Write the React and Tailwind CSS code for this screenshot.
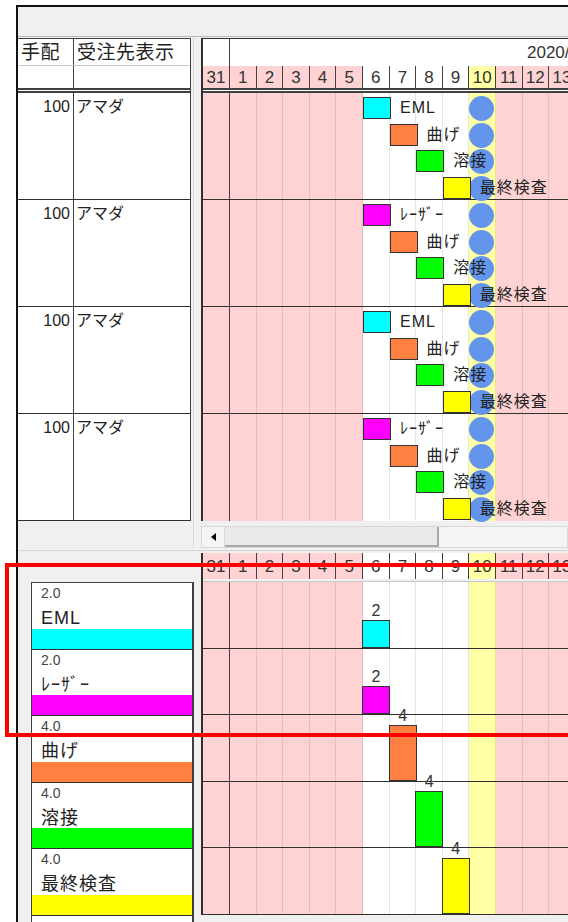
import React from 'react';

const DAYS = [31, 1, 2, 3, 4, 5, 6, 7, 8, 9, 10, 11, 12, 13];
const COL0 = 27;
const COLW = 26.6;
const colLeft = (k) => (k === 0 ? 0 : COL0 + (k - 1) * COLW);

function dayBg(d) {
  if (d === 10) return 'bg-[#ffffa6]';
  if (d >= 6 && d <= 9) return 'bg-white';
  return 'bg-[#ffd3d3]';
}

const TASKS = {
  eml: { name: 'EML', color: 'bg-[#00ffff]' },
  laser: { name: 'ﾚｰｻﾞｰ', color: 'bg-[#ff00ff]' },
  bend: { name: '曲げ', color: 'bg-[#ff8040]' },
  weld: { name: '溶接', color: 'bg-[#00ff00]' },
  check: { name: '最終検査', color: 'bg-[#ffff00]' },
};

// 上段: 受注ごとの工程
const ORDERS = [
  { qty: 100, client: 'アマダ', steps: ['eml', 'bend', 'weld', 'check'] },
  { qty: 100, client: 'アマダ', steps: ['laser', 'bend', 'weld', 'check'] },
  { qty: 100, client: 'アマダ', steps: ['eml', 'bend', 'weld', 'check'] },
  { qty: 100, client: 'アマダ', steps: ['laser', 'bend', 'weld', 'check'] },
];

// 下段: 工程ごとの負荷
const LOADS = [
  { key: 'eml', value: 2, day: 6 },
  { key: 'laser', value: 2, day: 6 },
  { key: 'bend', value: 4, day: 7 },
  { key: 'weld', value: 4, day: 8 },
  { key: 'check', value: 4, day: 9 },
];

function Columns() {
  return (
    <div className="absolute inset-0 flex">
      {DAYS.map((d, k) => (
        <div
          key={k}
          className={`h-full shrink-0 border-r ${k === 0 ? 'w-[27px] border-[#404040]' : 'w-[26.6px] border-black/10'} ${dayBg(d)}`}
        />
      ))}
    </div>
  );
}

function DayHeader({ h = 'h-[22px]' }) {
  return (
    <div className={`flex ${h}`}>
      {DAYS.map((d, k) => (
        <div
          key={k}
          className={`shrink-0 h-full border-r border-[#404040] flex items-center justify-center text-[17px] leading-none text-[#333] ${k === 0 ? 'w-[27px]' : 'w-[26.6px]'} ${dayBg(d)}`}
        >
          {d}
        </div>
      ))}
    </div>
  );
}

function OrderRow({ order, last }) {
  return (
    <div className={`relative h-[107px] ${last ? '' : 'border-b border-[#303030]'}`}>
      {order.steps.map((s, i) => (
        <div
          key={'c' + i}
          className="absolute w-[25px] h-[25px] rounded-full bg-[#6495ed]"
          style={{ left: colLeft(10), top: 3 + i * 26.6 }}
        />
      ))}
      {order.steps.map((s, i) => {
        const x = colLeft(6 + i);
        const y = 4 + i * 26.6;
        return (
          <React.Fragment key={i}>
            <div
              className={`absolute w-[28px] h-[22px] border border-[#333] ${TASKS[s].color}`}
              style={{ left: x, top: y }}
            />
            <div
              className="absolute h-[22px] flex items-center whitespace-nowrap text-[16px] tracking-[1px] leading-none text-[#222]"
              style={{ left: x + 37, top: y }}
            >
              {TASKS[s].name}
            </div>
          </React.Fragment>
        );
      })}
    </div>
  );
}

export default function App() {
  return (
    <div className="relative w-[568px] h-[922px] overflow-hidden bg-white font-['Liberation_Sans','Noto_Sans_CJK_JP',sans-serif] text-[#222]">
      <div className="ml-[16px] mt-[5px] h-[917px] border-l-2 border-t-2 border-[#111] bg-[#f0f0f0]">
        {/* 上部の帯 */}
        <div className="h-[30px] border-b border-[#b8b8b8] bg-[#f0f0f0]" />

        {/* 上段 */}
        <div className="flex pt-[1px]">
          <div className="w-[173px] shrink-0">
            <div className="border-t border-r border-[#404040] bg-white">
              <div className="flex h-[27px] border-b border-[#c8c8c8]">
                <div className="w-[56px] border-r border-[#404040] pl-[3px] pt-[4px] text-[19px] tracking-[0.5px] leading-none">手配</div>
                <div className="flex-1 pl-[3px] pt-[4px] text-[19px] tracking-[0.5px] leading-none">受注先表示</div>
              </div>
              <div className="flex h-[27px] border-b-[5px] border-double border-[#404040]">
                <div className="w-[56px] border-r border-[#404040]" />
                <div className="flex-1" />
              </div>
              {ORDERS.map((o, i) => (
                <div key={i} className="flex h-[107px] border-b border-[#303030]">
                  <div className="w-[56px] border-r border-[#404040] pr-[3px] pt-[4px] text-right text-[16px] leading-[20px]">{o.qty}</div>
                  <div className="flex-1 pl-[2px] pt-[4px] text-[16px] leading-[20px]">{o.client}</div>
                </div>
              ))}
            </div>
          </div>

          <div className="w-[8px] shrink-0 ml-[2px] border-l border-[#dadada]" />

          <div className="flex-1 min-w-0">
            <div className="border-l-2 border-t border-[#303030] bg-white">
              <div className="flex h-[27px]">
                <div className="w-[27px] shrink-0 border-r border-[#404040]" />
                <div className="pl-[297px] pt-[5px] whitespace-nowrap text-[17px] leading-none text-[#333]">2020/08</div>
              </div>
              <div className="border-b-[5px] border-double border-[#404040]">
                <DayHeader />
              </div>
              <div className="relative">
                <Columns />
                <div className="relative">
                  {ORDERS.map((o, i) => (
                    <OrderRow key={i} order={o} last={i === ORDERS.length - 1} />
                  ))}
                </div>
              </div>
            </div>

            {/* スクロールバー */}
            <div className="mt-[5px] h-[22px] flex border border-[#d8d8d8] bg-[#f4f4f4]">
              <div className="w-[23px] shrink-0 flex items-center justify-center border-r border-[#d8d8d8]">
                <div className="w-0 h-0 border-y-[4px] border-y-transparent border-r-[5px] border-r-black" />
              </div>
              <div className="w-[214px] shrink-0 bg-[#e9e9e9] border-r-2 border-b-2 border-[#a8a8a8]" />
            </div>
          </div>
        </div>

        {/* 区切り */}
        <div className="mt-[2px] border-t border-[#d4d4d4]" />

        {/* 下段 */}
        <div className="flex">
          <div className="w-[176px] shrink-0 pl-[13px] pt-[31px]">
            <div className="border-l border-t border-r-2 border-[#404040] bg-white h-[400px]">
              {LOADS.map((l) => (
                <div key={l.key} className="flex flex-col h-[66.6px] border-b border-[#303030]">
                  <div className="pl-[9px] pt-[2px] text-[14px] leading-[16px] text-[#444]">{l.value.toFixed(1)}</div>
                  <div className="pl-[9px] mt-[7px] text-[18px] tracking-[1px] leading-[20px] whitespace-nowrap">{TASKS[l.key].name}</div>
                  <div className="flex-1" />
                  <div className={`h-[20px] ${TASKS[l.key].color}`} />
                </div>
              ))}
            </div>
          </div>

          <div className="w-[7px] shrink-0" />

          <div className="flex-1 min-w-0 pt-[2px]">
            <div className="border-l-2 border-[#303030]">
              <DayHeader h="h-[26px]" />
              <div className="h-[3px] border-b border-[#c8c8c8] bg-[#f0f0f0]" />
              <div className="relative">
                <Columns />
                <div className="relative">
                  {LOADS.map((l) => {
                    const h = l.value * 14;
                    const x = colLeft(l.day) - 1;
                    return (
                      <div key={l.key} className="relative h-[66.6px] border-b border-[#303030]">
                        <div
                          className={`absolute w-[28px] border border-[#333] ${TASKS[l.key].color}`}
                          style={{ left: x, bottom: 0, height: h }}
                        />
                        <div
                          className="absolute w-[28px] text-center text-[16px] leading-none text-[#333]"
                          style={{ left: x, bottom: h + 1 }}
                        >
                          {l.value}
                        </div>
                      </div>
                    );
                  })}
                </div>
              </div>
            </div>
          </div>
        </div>
      </div>

      {/* 注記の赤枠 */}
      <div className="absolute left-[5px] top-[563px] w-[620px] h-[174px] border-4 border-[#ff0000] pointer-events-none" />
    </div>
  );
}
